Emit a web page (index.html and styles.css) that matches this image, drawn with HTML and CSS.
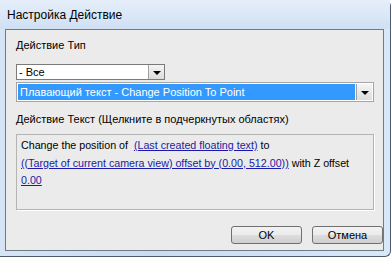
FILE: index.html
```html
<!DOCTYPE html>
<html lang="ru">
<head>
    <meta charset="UTF-8">
    <title>Настройка Действие</title>
    <link rel="stylesheet" href="styles.css">
</head>
<body>
    <div class="window">
        <div class="titlebar">Настройка Действие</div>
        <div class="client">
            <div class="label">Действие Тип</div>
            <div class="combo combo-small">
                <span class="combo-text">- Все</span>
                <span class="combo-btn"><i class="arrow"></i></span>
            </div>
            <div class="combo combo-wide">
                <span class="combo-text selected">Плавающий текст - Change Position To Point</span>
                <span class="combo-btn"><i class="arrow"></i></span>
            </div>
            <div class="label label-text">Действие Текст (Щелкните в подчеркнутых областях)</div>
            <div class="textbox">
                Change the position of&nbsp; <a href="#">(Last created floating text)</a> to<br>
                <a href="#">((Target of current camera view) offset by (0.00, 512.00))</a> with Z offset<br>
                <a href="#">0.00</a>
            </div>
            <div class="buttons">
                <button type="button">OK</button>
                <button type="button">Отмена</button>
            </div>
        </div>
    </div>
</body>
</html>
```

FILE: styles.css
```css
body {
    margin: 0;
    padding: 0;
    background-color: #fff;
    font-family: "Liberation Sans", Arial, sans-serif;
    font-size: 11px;
    color: #000;
}
.window {
    width: 390px;
    height: 256px;
    display: flex;
    flex-direction: column;
    background: linear-gradient(to right, #d6e5f5, #c9dcf1 40%, #d9e8f8);
    border-right: 1px solid #4d5b6b;
    border-bottom: 1px solid #4d5b6b;
    border-radius: 0 6px 6px 0;
}
.titlebar {
    height: 29px;
    line-height: 30px;
    padding-left: 7px;
    font-size: 12px;
    background: linear-gradient(to bottom, #e6effa, #cfe0f3);
}
.client {
    margin-left: 5px;
    width: 379px;
    height: 222px;
    box-sizing: border-box;
    padding: 9px 0 0 10px;
    border: 1px solid #6f7b88;
    background-color: #ebebeb;
    display: flex;
    flex-direction: column;
}
.label {
    line-height: 13px;
    white-space: nowrap;
}
.label-text {
    margin-top: 11px;
}
.combo {
    display: flex;
    box-sizing: border-box;
    border: 1px solid #7a7a7a;
    background-color: #fff;
}
.combo-small {
    margin-top: 12px;
    width: 149px;
    height: 16px;
}
.combo-wide {
    margin-top: 2px;
    width: 358px;
    height: 20px;
    border-color: #a5a5a5;
    padding: 1px;
}
.combo-text {
    flex: 1;
    line-height: 14px;
    padding-left: 2px;
    white-space: nowrap;
}
.combo-text.selected {
    background-color: #3399ff;
    color: #fff;
    line-height: 16px;
    margin-right: 1px;
}
.combo-btn {
    width: 16px;
    box-sizing: border-box;
    background: linear-gradient(to bottom, #f4f4f4, #dcdcdc);
    border-left: 1px solid #a0a0a0;
    display: flex;
    align-items: center;
    justify-content: center;
}
.arrow {
    width: 0;
    height: 0;
    border-left: 4px solid transparent;
    border-right: 4px solid transparent;
    border-top: 4px solid #000;
    margin-top: 1px;
}
.textbox {
    margin-top: 8px;
    width: 358px;
    height: 76px;
    box-sizing: border-box;
    border: 1px solid #b4b4b4;
    box-shadow: 1px 1px 0 #fff;
    padding: 2px 4px;
    font-size: 10.7px;
    line-height: 17.5px;
    white-space: nowrap;
}
.textbox a {
    color: #1a1aa8;
    text-decoration: underline;
}
.buttons {
    margin-top: 16px;
    width: 367px;
    display: flex;
    justify-content: flex-end;
    gap: 10px;
}
.buttons button {
    width: 71px;
    height: 18px;
    padding: 0;
    font-family: "Liberation Sans", Arial, sans-serif;
    font-size: 11px;
    color: #000;
    border: 1px solid #707070;
    border-radius: 3px;
    background: linear-gradient(to bottom, #f2f2f2 0%, #ebebeb 50%, #dddddd 51%, #cfcfcf 100%);
}
```
